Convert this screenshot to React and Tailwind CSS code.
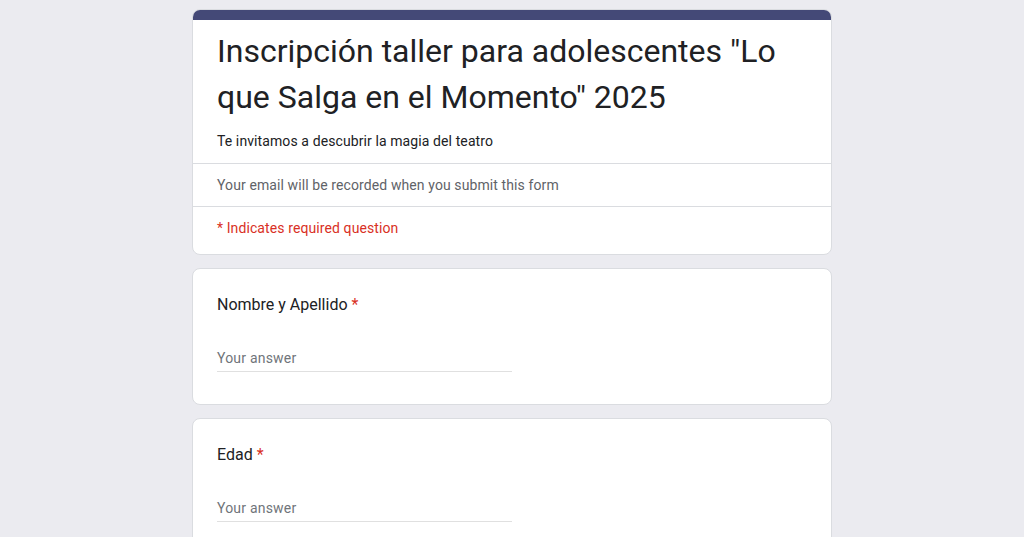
export default function App() {
  const questions = ['Nombre y Apellido', 'Edad']

  return (
    <div className="min-h-screen bg-[#ebebf0] pt-[9px] font-['Roboto',sans-serif]">
      <div className="mx-auto flex w-[640px] flex-col gap-[13px]">
        {/* Header card */}
        <div className="overflow-hidden rounded-lg border border-[#dadce0] bg-white">
          <div className="h-[10px] bg-[#444977]" />
          <div className="px-6 pt-[8px] pb-[12px]">
            <h1 className="text-[32px] leading-[46px] text-[#202124]">
              Inscripción taller para adolescentes "Lo que Salga en el Momento" 2025
            </h1>
            <p className="mt-[11px] text-[14px] leading-[20px] tracking-[0.1px] text-[#202124]">
              Te invitamos a descubrir la magia del teatro
            </p>
          </div>
          <div className="border-t border-[#dadce0] px-6 py-[11px] text-[14px] leading-[20px] tracking-[0.1px] text-[#5f6368]">
            Your email will be recorded when you submit this form
          </div>
          <div className="border-t border-[#dadce0] px-6 pt-[11px] pb-[16px] text-[14px] leading-[20px] tracking-[0.1px] text-[#d93025]">
            * Indicates required question
          </div>
        </div>

        {questions.map((q) => (
          <div key={q} className="rounded-lg border border-[#dadce0] bg-white px-6 pt-[24px] pb-[32px]">
            <div className="text-[16px] leading-[24px] text-[#202124]">
              {q} <span className="text-[#d93025]">*</span>
            </div>
            <div className="mt-[31px] w-[295px] border-b border-[#e0e0e0] pb-[3px] text-[14px] leading-[20px] tracking-[0.2px] text-[#70757a]">
              Your answer
            </div>
          </div>
        ))}
      </div>
    </div>
  )
}
